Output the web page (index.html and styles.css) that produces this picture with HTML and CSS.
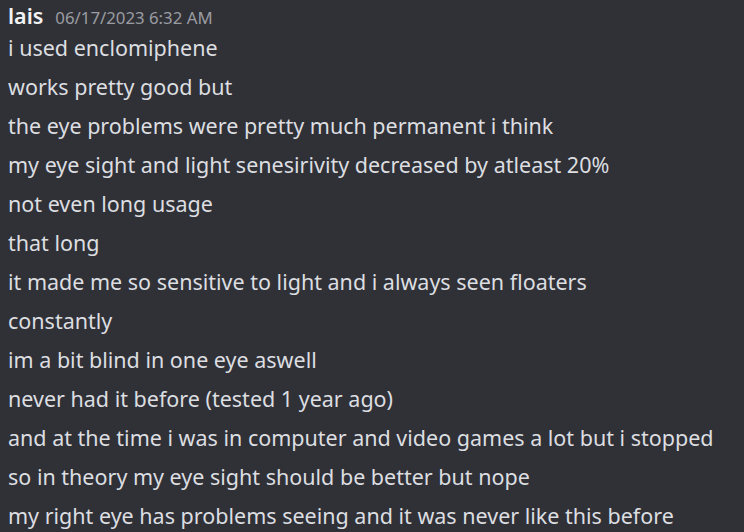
FILE: index.html
```html
<!DOCTYPE html>
<html>
<head>
<meta charset="utf-8">
<link rel="stylesheet" href="styles.css">
</head>
<body>
<div class="message">
  <div class="header">
    <span class="username">lais</span>
    <span class="timestamp">06/17/2023 6:32 AM</span>
  </div>
  <div class="lines">
    <div class="line">i used enclomiphene</div>
    <div class="line">works pretty good but</div>
    <div class="line">the eye problems were pretty much permanent i think</div>
    <div class="line">my eye sight and light senesirivity decreased by atleast 20%</div>
    <div class="line">not even long usage</div>
    <div class="line">that long</div>
    <div class="line">it made me so sensitive to light and i always seen floaters</div>
    <div class="line">constantly</div>
    <div class="line">im a bit blind in one eye aswell</div>
    <div class="line">never had it before (tested 1 year ago)</div>
    <div class="line">and at the time i was in computer and video games a lot but i stopped</div>
    <div class="line">so in theory my eye sight should be better but nope</div>
    <div class="line">my right eye has problems seeing and it was never like this before</div>
  </div>
</div>
</body>
</html>
```
FILE: styles.css
```css
html, body {
  margin: 0;
  padding: 0;
  background: #303136;
  height: 100%;
  overflow: hidden;
}
body {
  font-family: "Noto Sans", "Open Sans", sans-serif;
  color: #dcdee1;
}
.message {
  padding: 0 8px;
}
.header {
  display: flex;
  align-items: baseline;
  gap: 12px;
  height: 28px;
  line-height: 31px;
}
.username {
  font-size: 21.5px;
  font-weight: 600;
  color: #f2f3f5;
}
.timestamp {
  font-size: 16.8px;
  color: #9a9ca2;
}
.lines {
  display: flex;
  flex-direction: column;
}
.line {
  font-size: 21.5px;
  line-height: 39px;
  white-space: nowrap;
}
```
